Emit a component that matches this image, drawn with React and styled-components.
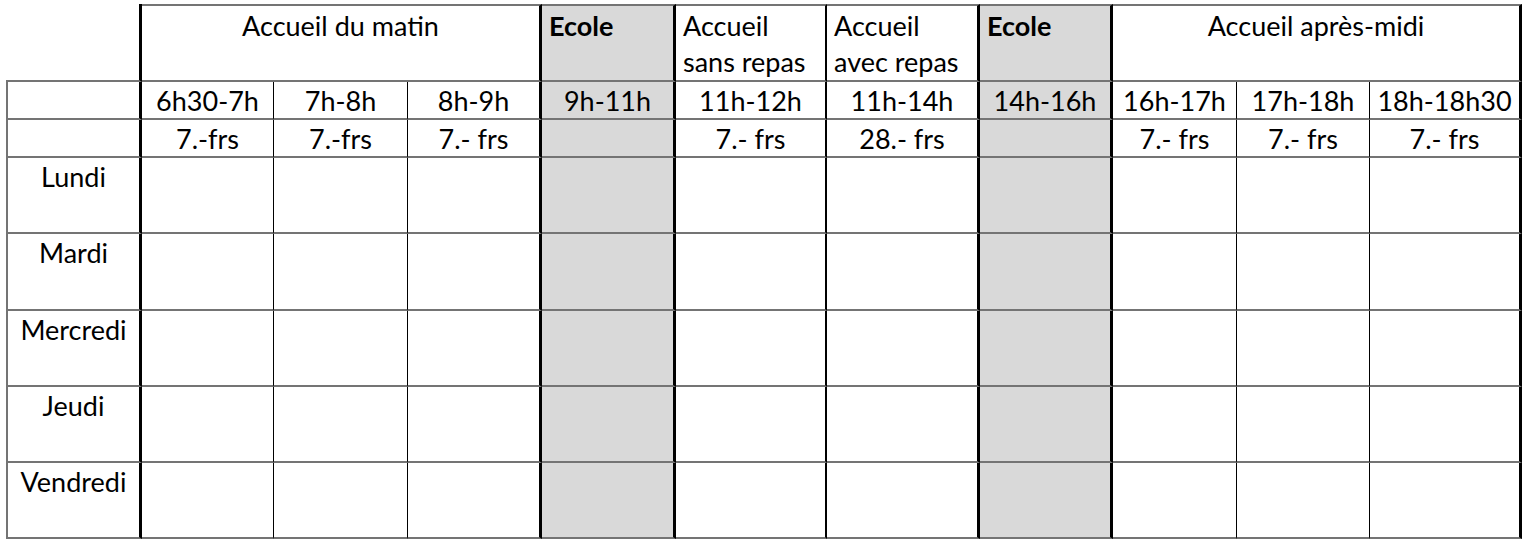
import styled, { createGlobalStyle } from 'styled-components';

const GlobalStyle = createGlobalStyle`
  body {
    margin: 0;
    background: #ffffff;
    font-family: Lato, "Liberation Sans", sans-serif;
  }
`;

const LINE = '#747474';
const SCHOOL = '#d9d9d9';

// right-hand border width for each of the 11 columns
const rightWeights = [3, 1, 1, 3, 3, 2, 3, 3, 1, 1, 3];
const schoolCols = [4, 7];

const Sheet = styled.div`
  display: grid;
  grid-template-columns: 136px 132px 134px 134px 134px 151px 153px 133px 124px 133px 152px;
  grid-template-rows: 78px 38px 38px 76px 77px 76px 76px 76px;
  margin: 4px 0 0 6px;
  width: 1516px;
  color: #000;
  font-size: 27px;
  line-height: 36px;
`;

const Cell = styled.div`
  box-sizing: border-box;
  grid-column: span ${(p) => p.$span || 1};
  background: ${(p) => (p.$school ? SCHOOL : '#fff')};
  border-bottom: 2px solid ${LINE};
  border-right: ${(p) => p.$right}px solid #000;
  border-top: ${(p) => (p.$top ? `2px solid ${LINE}` : 'none')};
  border-left: ${(p) => (p.$left ? `2px solid ${LINE}` : 'none')};
  padding: ${(p) => (p.$top ? '2px 7px 0' : '1px 7px 0')};
  text-align: ${(p) => p.$align || 'center'};
  font-weight: ${(p) => (p.$bold ? 700 : 400)};
  white-space: nowrap;
`;

const Corner = styled.div`
  box-sizing: border-box;
  border-bottom: 2px solid ${LINE};
  border-right: 3px solid #000;
`;

const headers = [
  { text: 'Accueil du matin', span: 3, right: 3 },
  { text: 'Ecole', bold: true, align: 'left', school: true, right: 3 },
  { text: 'Accueil', sub: 'sans repas', align: 'left', right: 2 },
  { text: 'Accueil', sub: 'avec repas', align: 'left', right: 3 },
  { text: 'Ecole', bold: true, align: 'left', school: true, right: 3 },
  { text: 'Accueil après-midi', span: 3, right: 3 },
];

const hours = ['6h30-7h', '7h-8h', '8h-9h', '9h-11h', '11h-12h', '11h-14h', '14h-16h', '16h-17h', '17h-18h', '18h-18h30'];
const prices = ['7.-frs', '7.-frs', '7.- frs', '', '7.- frs', '28.- frs', '', '7.- frs', '7.- frs', '7.- frs'];
const days = ['Lundi', 'Mardi', 'Mercredi', 'Jeudi', 'Vendredi'];

const Row = ({ label, values }) => (
  <>
    <Cell $left $right={3}>{label}</Cell>
    {values.map((v, i) => (
      <Cell key={i} $right={rightWeights[i + 1]} $school={schoolCols.includes(i + 1)}>
        {v}
      </Cell>
    ))}
  </>
);

const App = () => {
  return (
    <>
      <GlobalStyle />
      <Sheet>
        <Corner />
        {headers.map((h, i) => (
          <Cell
            key={i}
            $top
            $span={h.span}
            $right={h.right}
            $bold={h.bold}
            $align={h.align}
            $school={h.school}
          >
            {h.text}
            {h.sub && <br />}
            {h.sub}
          </Cell>
        ))}
        <Row label="" values={hours} />
        <Row label="" values={prices} />
        {days.map((d) => (
          <Row key={d} label={d} values={Array(10).fill('')} />
        ))}
      </Sheet>
    </>
  );
};

export default App;
